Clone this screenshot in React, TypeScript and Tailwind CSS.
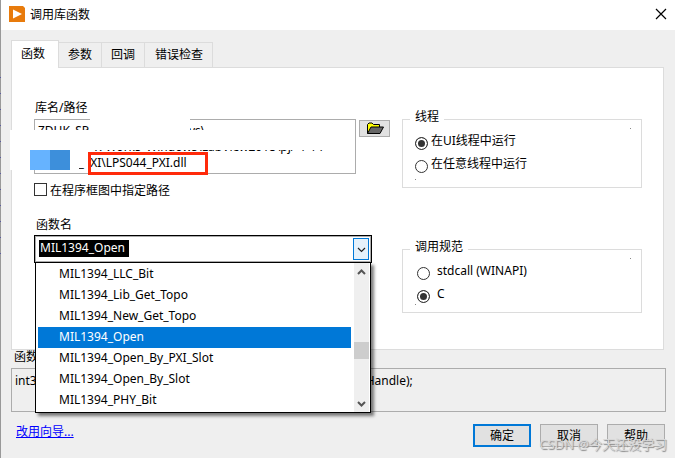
import { useState } from "react";
import type { ReactNode } from "react";

const TABS = ["函数", "参数", "回调", "错误检查"];

const FUNCTIONS = [
  "MIL1394_LLC_Bit",
  "MIL1394_Lib_Get_Topo",
  "MIL1394_New_Get_Topo",
  "MIL1394_Open",
  "MIL1394_Open_By_PXI_Slot",
  "MIL1394_Open_By_Slot",
  "MIL1394_PHY_Bit",
];

const LIBRARY_PATH = [
  "ZDHK_SP                                vs\\",
  "                  K-Works_Windows\\LabView2018\\pj/- / \\ \\",
  "             _  XI\\LPS044_PXI.dll",
].join("\n");

function Chevron({ up, bold }: { up?: boolean; bold?: boolean }) {
  return (
    <svg
      width="9"
      height="7"
      viewBox="0 0 9 7"
      fill="none"
      stroke={bold ? "#555" : "#222"}
      strokeWidth={bold ? 2 : 1.2}
    >
      <path d={up ? "M1 5 L4.5 1.5 L8 5" : "M1 2 L4.5 5.5 L8 2"} />
    </svg>
  );
}

function FolderIcon() {
  return (
    <svg width="18" height="13" viewBox="0 0 18 13" strokeLinejoin="round">
      <path
        d="M1.5 11.5V2.5L3 1H6L7.5 2.5H13.5V5.5"
        fill="#ffff00"
        stroke="#000"
      />
      <path d="M1.5 11.5L5 5H17.5L14 11.5Z" fill="#666" stroke="#000" />
    </svg>
  );
}

function Group({
  legend,
  className,
  children,
}: {
  legend: string;
  className?: string;
  children: ReactNode;
}) {
  return (
    <fieldset
      className={`relative min-w-0 border border-[#dcdcdc] pt-0.5 ${className ?? ""}`}
    >
      <legend className="ml-[7px] h-[18px] px-[5px] leading-[14px]">
        {legend}
      </legend>
      {children}
      {/* corner specks */}
      <i className="absolute top-0 right-[10px] size-px bg-[#888]" />
      <i className="absolute bottom-[7px] left-[12px] size-px bg-[#888]" />
    </fieldset>
  );
}

function Radio({
  name,
  label,
  checked,
  onSelect,
  className,
}: {
  name: string;
  label: string;
  checked: boolean;
  onSelect: () => void;
  className: string;
}) {
  return (
    <label className={`flex h-[23px] items-start ${className}`}>
      <input
        type="radio"
        name={name}
        checked={checked}
        onChange={onSelect}
        className="mt-[7px] size-[13px] shrink-0 appearance-none rounded-full border border-[#333] bg-white checked:bg-[#333] checked:shadow-[inset_0_0_0_2px_white]"
      />
      <span className="leading-[22px]">{label}</span>
    </label>
  );
}

export default function App() {
  const [tab, setTab] = useState(TABS[0]);
  const [thread, setThread] = useState("ui");
  const [convention, setConvention] = useState("c");
  const [selected, setSelected] = useState("MIL1394_Open");

  return (
    <div className="relative border-l border-[#999] bg-[#efefef] pb-[11px] font-['Noto_Sans','Noto_Sans_CJK_SC',sans-serif] text-[12px] text-black">
      {/* window behind, showing at the left edge */}
      <div className="absolute top-[77px] -left-px h-[180px] w-px bg-[repeating-linear-gradient(#5a5aa0_0_1px,#999_1px_16px)]" />

      <header className="flex h-[30px] items-center bg-white pr-2 pl-2">
        <svg width="16" height="16" viewBox="0 0 16 16" className="-mt-0.5">
          <path d="M0 0H14L16 2V16H0Z" fill="#e87b0c" />
          <path d="M4 3.5L13 8L4 12.5Z" fill="#fff" />
        </svg>
        <h1 className="ml-[5px] leading-[28px]">调用库函数</h1>
        <button aria-label="关闭" className="ml-auto pb-0.5">
          <svg width="12" height="12" viewBox="0 0 12 12" stroke="#000">
            <path d="M1 1L11 11M11 1L1 11" strokeWidth="1.2" />
          </svg>
        </button>
      </header>

      <main className="pt-[10px] pr-[9px] pl-[10px]">
        <div role="tablist" className="relative -mb-px flex items-end">
          {TABS.map((t) => (
            <button
              key={t}
              role="tab"
              aria-selected={t === tab}
              onClick={() => setTab(t)}
              className={
                t === tab
                  ? "h-7 border border-b-0 border-[#dcdcdc] bg-white pr-[13px] pb-[2px] pl-[9px]"
                  : "mb-px h-[25px] border border-l-0 border-b-0 border-[#dcdcdc] px-[9px] last:pl-[10px]"
              }
            >
              {t}
            </button>
          ))}
        </div>

        <section className="mr-[2px] grid grid-cols-[356fr_240fr] gap-3 border border-[#dcdcdc] bg-white pr-[21px] pl-[22px]">
          <div className="pt-[31px] pb-[86px]">
            <label htmlFor="path" className="block h-5 pl-px leading-[18px]">
              库名/路径
            </label>
            <div className="relative flex items-start gap-[3px]">
              <textarea
                id="path"
                defaultValue={LIBRARY_PATH}
                wrap="off"
                className="h-[55px] min-w-0 flex-1 resize-none overflow-hidden border border-[#acacac] bg-white px-[3px] pt-[3px] leading-4"
              />
              {/* masked parts of the path */}
              <div className="absolute top-0 left-14 h-3 w-[100px] bg-white" />
              <div className="absolute top-[11px] -left-6 h-5 w-[340px] bg-white" />
              <div className="absolute top-[31px] -left-6 flex h-5 w-[69px] bg-white pl-5">
                <div className="w-5 bg-[#66b3ff]" />
                <div className="w-5 bg-[#3d8fdb]" />
              </div>
              <div className="absolute top-[33px] left-[54px] h-[23px] w-[120px] border-3 border-[#ff2a0a]" />
              <button
                aria-label="浏览"
                className="mt-px flex h-[17px] w-[31px] items-center justify-center border border-[#acacac] bg-[#e1e1e1]"
              >
                <FolderIcon />
              </button>
            </div>

            <label className="mt-[8px] flex h-[18px] items-center gap-[3px]">
              <input
                type="checkbox"
                className="mb-1 size-[13px] appearance-none border border-[#333] bg-white checked:bg-[#333]"
              />
              <span>在程序框图中指定路径</span>
            </label>

            <label
              htmlFor="function"
              className="mt-4 block h-[19px] pl-0.5 leading-[18px]"
            >
              函数名
            </label>
            <div className="relative mr-[18px]">
              <div className="flex h-7 items-center border border-black bg-white px-[2px] shadow-[inset_0_0_0_1px_#acacac]">
                <input
                  id="function"
                  value={selected}
                  onChange={(e) => setSelected(e.target.value)}
                  className="mb-[2px] ml-[2px] h-[17px] w-[90px] bg-black pl-px text-white outline-none"
                />
                <button
                  aria-label="展开"
                  className="ml-auto flex h-[22px] w-4 items-center justify-center border border-[#0078d7] bg-[#e5f1fb]"
                >
                  <Chevron />
                </button>
              </div>
              <div className="absolute inset-x-px top-[27px] z-10 flex border border-black bg-white pb-px shadow-[3px_3px_3px_rgba(0,0,0,0.5)]">
                <ul role="listbox" className="mr-[3px] ml-[2px] flex-1 pt-px">
                  {FUNCTIONS.map((f) => (
                    <li
                      key={f}
                      role="option"
                      aria-selected={f === selected}
                      onClick={() => setSelected(f)}
                      className={`h-[21px] pl-[21px] leading-5 ${
                        f === selected ? "bg-[#0078d7] text-white" : ""
                      }`}
                    >
                      {f}
                    </li>
                  ))}
                </ul>
                <div className="mr-px -mb-px flex w-[15px] flex-col items-center bg-[#efefef]">
                  <button aria-label="向上" className="flex h-[18px] items-center">
                    <Chevron up bold />
                  </button>
                  <div className="mt-[61px] h-[17px] w-full bg-[#cdcdcd]" />
                  <button
                    aria-label="向下"
                    className="mt-auto flex h-[18px] items-center"
                  >
                    <Chevron bold />
                  </button>
                </div>
              </div>
            </div>
          </div>

          <div className="pt-[42px]">
            <Group legend="线程" className="pb-[11px]">
              <Radio
                name="thread"
                label="在UI线程中运行"
                checked={thread === "ui"}
                onSelect={() => setThread("ui")}
                className="gap-[3px] pl-3"
              />
              <Radio
                name="thread"
                label="在任意线程中运行"
                checked={thread === "any"}
                onSelect={() => setThread("any")}
                className="gap-[3px] pl-3"
              />
            </Group>
            <Group legend="调用规范" className="mt-[52px] pb-[6px]">
              <Radio
                name="convention"
                label="stdcall (WINAPI)"
                checked={convention === "stdcall"}
                onSelect={() => setConvention("stdcall")}
                className="gap-[7px] pl-[14px]"
              />
              <Radio
                name="convention"
                label="C"
                checked={convention === "c"}
                onSelect={() => setConvention("c")}
                className="gap-[7px] pl-[14px]"
              />
            </Group>
          </div>
        </section>

        <h2 className="h-[18px] pl-[3px] leading-[14px]">函数原型</h2>
        <div className="h-11 border border-[#acacac] pt-[3px] pl-[3px] leading-[18px]">
          int32_t MIL1394_Open(uint32_t cardID, uint32_t mode, void *pHandle);
        </div>

        <footer className="mt-3 flex items-start gap-[9px] pr-px">
          <a
            href="#wizard"
            className="mr-auto pl-[5px] leading-4 text-[#0000ff] underline"
          >
            改用向导...
          </a>
          <button className="h-[23px] w-[58px] border-2 border-[#0078d7] bg-[#e1e1e1]">
            确定
          </button>
          <button className="h-[23px] w-[58px] border border-[#acacac] bg-[#e1e1e1]">
            取消
          </button>
          <button className="h-[23px] w-[58px] border border-[#acacac] bg-[#e1e1e1]">
            帮助
          </button>
        </footer>
      </main>

      <span className="pointer-events-none absolute right-2 bottom-1 text-[13px] leading-5 text-[#d8d8d8] [text-shadow:1px_1px_1px_#888]">
        CSDN @今天还没学习
      </span>
    </div>
  );
}
